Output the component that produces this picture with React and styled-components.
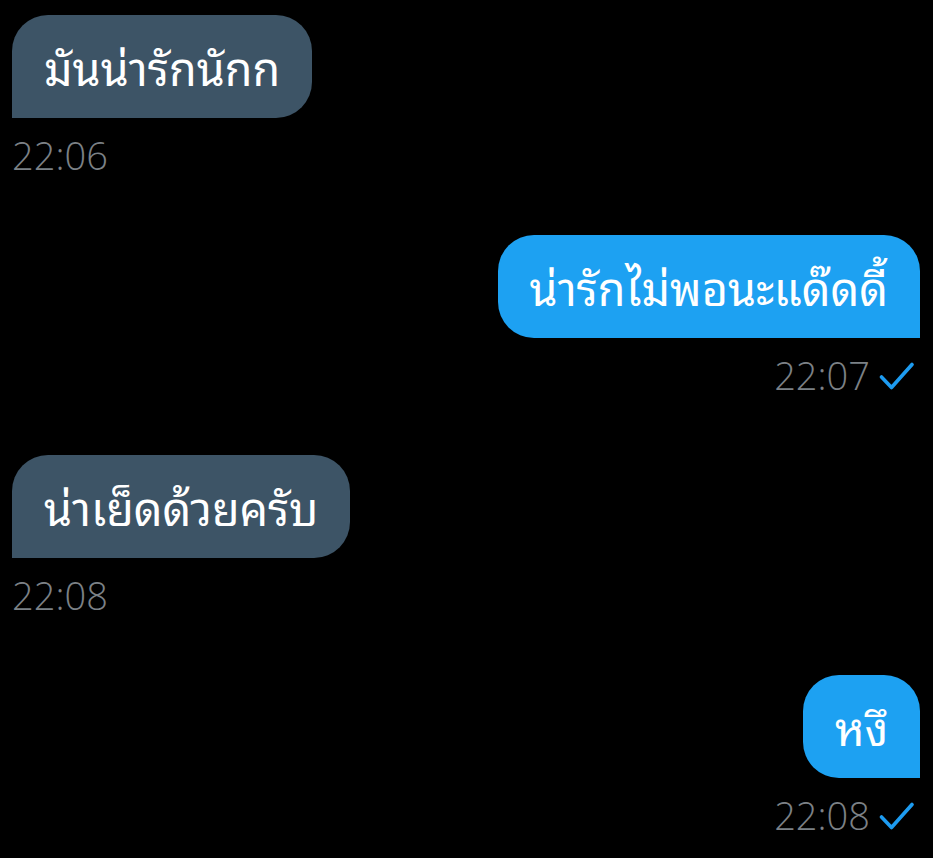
import React from "react";
import styled, { createGlobalStyle } from "styled-components";

const Global = createGlobalStyle`
  html, body { margin: 0; padding: 0; background: #000; }
  body { font-family: "Noto Sans Thai Looped", "Noto Sans", sans-serif; }
`;

const Page = styled.div`
  width: 933px;
  height: 858px;
  background: #000;
  padding: 15px 13px 0 12px;
  box-sizing: border-box;
  display: flex;
  flex-direction: column;
  overflow: hidden;
`;

const Message = styled.div`
  flex: 0 0 220px;
  display: flex;
  flex-direction: column;
  align-items: ${(p) => (p.$out ? "flex-end" : "flex-start")};
`;

const Bubble = styled.div`
  height: 103px;
  box-sizing: border-box;
  padding: 0 32px;
  display: flex;
  align-items: center;
  background: ${(p) => (p.$out ? "#1da1f2" : "#3d5466")};
  color: #fff;
  font-family: "Noto Sans Thai Looped", "Noto Sans", sans-serif;
  font-size: 45px;
  line-height: 1;
  border-radius: ${(p) => (p.$out ? "36px 36px 0 36px" : "36px 36px 36px 0")};
  white-space: nowrap;
`;

const Meta = styled.div`
  display: flex;
  align-items: flex-start;
  gap: 9px;
  margin-top: 18px;
  margin-right: 5px;
  color: #7c8186;
  font-family: "Open Sans", "Noto Sans", sans-serif;
  font-weight: 300;
  font-size: 38px;
  line-height: 38px;
`;

const Time = styled.span`
  display: block;
`;

const CheckIcon = styled.svg`
  display: block;
  margin-top: 6px;
`;

const Check = () => (
  <CheckIcon width="36" height="29" viewBox="0 0 36 29" fill="none">
    <path d="M2.5 15 L12.5 25.5 L33 2.5" stroke="#1d9bf0" strokeWidth="3.6" strokeLinecap="round" strokeLinejoin="round" />
  </CheckIcon>
);

const messages = [
  { text: "มันน่ารักนักก", time: "22:06", out: false },
  { text: "น่ารักไม่พอนะแด๊ดดี้", time: "22:07", out: true },
  { text: "น่าเย็ดด้วยครับ", time: "22:08", out: false },
  { text: "หงึ", time: "22:08", out: true },
];

export default function App() {
  return (
    <Page>
      <Global />
      {messages.map((m, i) => (
        <Message key={i} $out={m.out}>
          <Bubble $out={m.out}>{m.text}</Bubble>
          <Meta>
            <Time>{m.time}</Time>
            {m.out && <Check />}
          </Meta>
        </Message>
      ))}
    </Page>
  );
}
